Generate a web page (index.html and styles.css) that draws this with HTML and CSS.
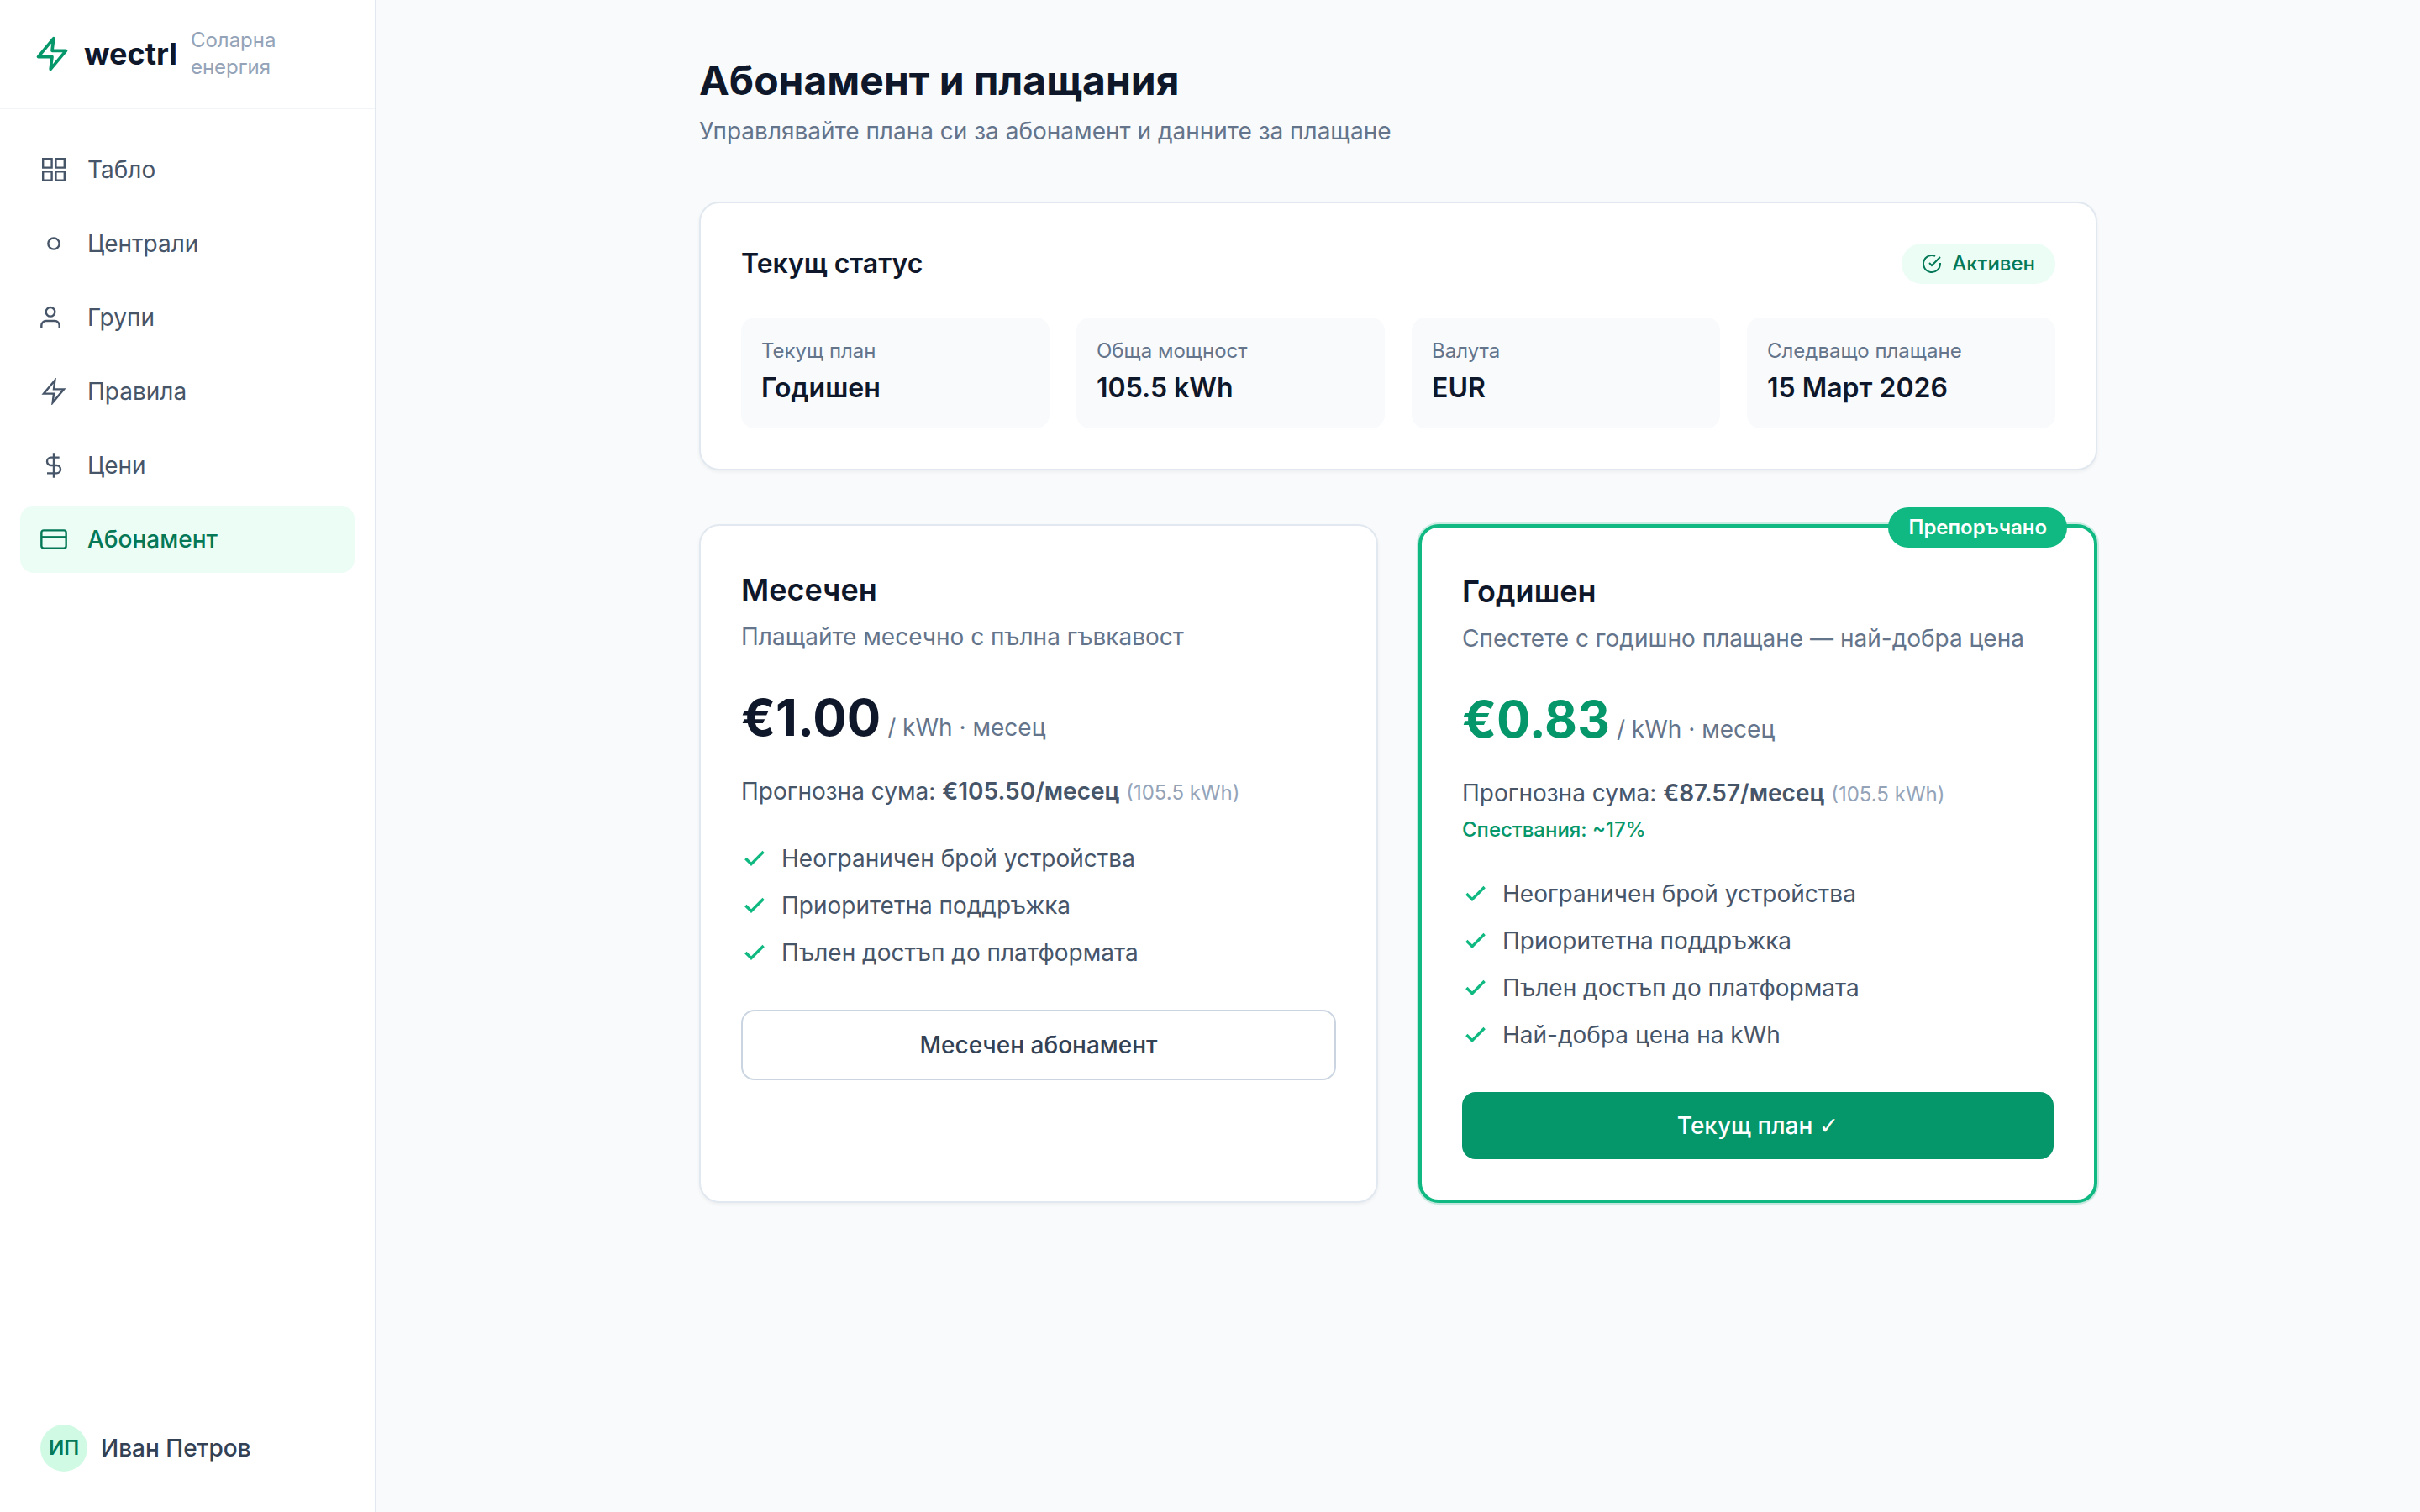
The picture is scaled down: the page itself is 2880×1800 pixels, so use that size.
FILE: index.html
```html
<!DOCTYPE html>
<html lang="bg">
<head>
<meta charset="utf-8">
<meta name="viewport" content="width=device-width, initial-scale=1">
<title>Абонамент и плащания – wectrl</title>
<link rel="stylesheet" href="styles.css">
</head>
<body>
<svg class="sprite" aria-hidden="true">
  <symbol id="check" viewBox="0 0 24 24"><path d="M20 6 9 17l-5-5"/></symbol>
</svg>
<div class="app">
  <aside class="sidebar">
    <header class="brand">
      <svg class="brand-icon" viewBox="0 0 24 24" aria-hidden="true"><path d="M13 2 3 14h9l-1 8 10-12h-9l1-8z"/></svg>
      <span class="brand-name">wectrl</span>
      <span class="brand-tagline">Соларна енергия</span>
    </header>
    <nav class="nav">
      <a class="nav-link" href="#"><svg class="nav-icon" viewBox="0 0 24 24" aria-hidden="true"><path d="M2.4 2.4h7.8v7.8H2.4zM13.8 2.4h7.8v7.8h-7.8zM2.4 13.8h7.8v7.8H2.4zM13.8 13.8h7.8v7.8h-7.8z"/></svg>Табло</a>
      <a class="nav-link" href="#"><svg class="nav-icon" viewBox="0 0 24 24" aria-hidden="true"><circle cx="12" cy="12" r="5"/></svg>Централи</a>
      <a class="nav-link" href="#"><svg class="nav-icon" viewBox="0 0 24 24" aria-hidden="true"><path d="M17 21v-2a4 4 0 0 0-4-4H5a4 4 0 0 0-4 4v2"/><circle cx="9" cy="7" r="4"/></svg>Групи</a>
      <a class="nav-link" href="#"><svg class="nav-icon" viewBox="0 0 24 24" aria-hidden="true"><path d="M13 2 3 14h9l-1 8 10-12h-9l1-8z"/></svg>Правила</a>
      <a class="nav-link" href="#"><svg class="nav-icon" viewBox="0 0 24 24" aria-hidden="true"><path d="M12 1v22M17 5H9.500a3.500 3.500 0 0 0 0 7h5a3.500 3.500 0 0 1 0 7H6"/></svg>Цени</a>
      <a class="nav-link nav-link-active" href="#" aria-current="page"><svg class="nav-icon" viewBox="0 0 24 24" aria-hidden="true"><rect x="1" y="4" width="22" height="16" rx="2"/><path d="M1 10h22"/></svg>Абонамент</a>
    </nav>
    <footer class="user">
      <span class="avatar">ИП</span>
      <span class="user-name">Иван Петров</span>
    </footer>
  </aside>

  <main class="main">
    <div class="content">
      <header class="page-header">
        <h1 class="page-title">Абонамент и плащания</h1>
        <p class="muted">Управлявайте плана си за абонамент и данните за плащане</p>
      </header>

      <section class="card">
        <div class="status-header">
          <h2 class="status-title">Текущ статус</h2>
          <span class="pill pill-active"><svg class="pill-icon" viewBox="0 0 24 24" aria-hidden="true"><path d="M22 11.080V12a10 10 0 1 1-5.930-9.140"/><path d="M22 4 12 14.010l-3-3"/></svg>Активен</span>
        </div>
        <dl class="stats">
          <div class="stat"><dt class="stat-label">Текущ план</dt><dd class="stat-value">Годишен</dd></div>
          <div class="stat"><dt class="stat-label">Обща мощност</dt><dd class="stat-value">105.5 kWh</dd></div>
          <div class="stat"><dt class="stat-label">Валута</dt><dd class="stat-value">EUR</dd></div>
          <div class="stat"><dt class="stat-label">Следващо плащане</dt><dd class="stat-value">15 Март 2026</dd></div>
        </dl>
      </section>

      <div class="plans">
        <section class="card">
          <h2 class="plan-title">Месечен</h2>
          <p class="plan-desc muted">Плащайте месечно с пълна гъвкавост</p>
          <p class="price"><span class="price-amount">€1.00</span><span class="muted">/ kWh · месец</span></p>
          <p class="estimate">Прогнозна сума: <strong>€105.50/месец</strong> <small>(105.5 kWh)</small></p>
          <ul class="features">
            <li class="feature"><svg class="check" aria-hidden="true"><use href="#check"/></svg>Неограничен брой устройства</li>
            <li class="feature"><svg class="check" aria-hidden="true"><use href="#check"/></svg>Приоритетна поддръжка</li>
            <li class="feature"><svg class="check" aria-hidden="true"><use href="#check"/></svg>Пълен достъп до платформата</li>
          </ul>
          <button class="button button-outline" type="button">Месечен абонамент</button>
        </section>

        <section class="card card-featured">
          <span class="pill pill-featured">Препоръчано</span>
          <h2 class="plan-title">Годишен</h2>
          <p class="plan-desc muted">Спестете с годишно плащане — най-добра цена</p>
          <p class="price"><span class="price-amount price-best">€0.83</span><span class="muted">/ kWh · месец</span></p>
          <p class="estimate">Прогнозна сума: <strong>€87.57/месец</strong> <small>(105.5 kWh)</small></p>
          <p class="savings">Спествания: ~17%</p>
          <ul class="features">
            <li class="feature"><svg class="check" aria-hidden="true"><use href="#check"/></svg>Неограничен брой устройства</li>
            <li class="feature"><svg class="check" aria-hidden="true"><use href="#check"/></svg>Приоритетна поддръжка</li>
            <li class="feature"><svg class="check" aria-hidden="true"><use href="#check"/></svg>Пълен достъп до платформата</li>
            <li class="feature"><svg class="check" aria-hidden="true"><use href="#check"/></svg>Най-добра цена на kWh</li>
          </ul>
          <button class="button button-primary" type="button">Текущ план <span class="tick">✓</span></button>
        </section>
      </div>
    </div>
  </main>
</div>
</body>
</html>
```
FILE: styles.css
```css
*,
*::before,
*::after {
  box-sizing: border-box;
}

body {
  margin: 0;
  background: #f8fafc;
  color: #0f172a;
  font-family: Inter, "Noto Sans", sans-serif;
  font-size: 28px;
  line-height: 40px;
  -webkit-font-smoothing: antialiased;
}

h1, h2, p, ul, dl, dd {
  margin: 0;
  padding: 0;
}

svg {
  display: block;
  flex: none;
  fill: none;
  stroke: currentColor;
}

.sprite {
  position: absolute;
  width: 0;
  height: 0;
}

.app {
  display: flex;
  min-height: 100vh;
}

/* Sidebar */

.sidebar {
  display: flex;
  flex: none;
  flex-direction: column;
  width: 448px;
  border-right: 2px solid #e2e8f0;
  background: #fff;
}

.brand {
  display: flex;
  align-items: center;
  gap: 16px;
  padding: 32px 40px;
  border-bottom: 2px solid #f1f5f9;
}

.brand-icon {
  width: 44px;
  height: 44px;
  color: #059669;
  stroke-width: 2;
  stroke-linecap: round;
  stroke-linejoin: round;
}

.brand-name {
  font-size: 36px;
  font-weight: 700;
}

.brand-tagline {
  color: #94a3b8;
  font-size: 24px;
  line-height: 32px;
}

.nav {
  display: flex;
  flex: 1;
  flex-direction: column;
  gap: 8px;
  padding: 32px 24px;
}

.nav-link {
  display: flex;
  align-items: center;
  gap: 24px;
  padding: 20px 24px;
  border-radius: 16px;
  color: #475569;
  text-decoration: none;
}

.nav-link-active {
  background: #ecfdf5;
  color: #047857;
  font-weight: 500;
}

.nav-icon {
  width: 32px;
  height: 32px;
  overflow: hidden;
  stroke-width: 1.8;
}

.user {
  display: flex;
  align-items: center;
  gap: 16px;
  padding: 48px;
}

.avatar {
  display: flex;
  align-items: center;
  justify-content: center;
  width: 56px;
  height: 56px;
  border-radius: 50%;
  background: #d1fae5;
  color: #047857;
  font-size: 24px;
  font-weight: 600;
  line-height: 32px;
}

.user-name {
  color: #334155;
  font-weight: 500;
}

/* Page */

.main {
  flex: 1;
  min-width: 0;
}

.content {
  display: flex;
  flex-direction: column;
  gap: 64px;
  max-width: 1792px;
  margin: 0 auto;
  padding: 64px;
}

.page-title {
  margin-bottom: 8px;
  font-size: 48px;
  font-weight: 700;
  line-height: 64px;
}

.muted {
  color: #64748b;
}

.card {
  position: relative;
  padding: 48px;
  border: 2px solid #e2e8f0;
  border-radius: 24px;
  background: #fff;
  box-shadow: 0 2px 4px rgb(0 0 0 / 5%);
}

.card-featured {
  border: 4px solid #10b981;
  box-shadow: 0 0 0 2px rgb(16 185 129 / 20%), 0 2px 4px rgb(0 0 0 / 5%);
}

.pill {
  display: flex;
  align-items: center;
  gap: 12px;
  padding: 8px 24px;
  border-radius: 24px;
  font-size: 24px;
  line-height: 32px;
}

.pill-active {
  background: #ecfdf5;
  color: #047857;
  font-weight: 500;
}

.pill-icon {
  width: 24px;
  height: 24px;
  stroke-width: 2;
}

.pill-featured {
  position: absolute;
  top: -24px;
  right: 32px;
  background: #10b981;
  color: #fff;
  font-weight: 600;
}

/* Current status */

.status-header {
  display: flex;
  align-items: center;
  justify-content: space-between;
  margin-bottom: 40px;
}

.status-title {
  font-size: 32px;
  font-weight: 600;
  line-height: 48px;
}

.stats {
  display: grid;
  grid-template-columns: repeat(4, 1fr);
  gap: 32px;
}

.stat {
  padding: 24px;
  border-radius: 16px;
  background: #f8fafc;
}

.stat-label {
  margin-bottom: 4px;
  color: #64748b;
  font-size: 24px;
  line-height: 32px;
}

.stat-value {
  font-size: 32px;
  font-weight: 600;
  line-height: 48px;
}

/* Plans */

.plans {
  display: grid;
  grid-template-columns: repeat(2, 1fr);
  gap: 48px;
}

.plan-title {
  font-size: 36px;
  font-weight: 600;
  line-height: 56px;
}

.plan-desc {
  margin-top: 8px;
}

.price {
  display: flex;
  align-items: baseline;
  gap: 8px;
  margin-top: 40px;
}

.price-amount {
  font-size: 60px;
  font-weight: 700;
  line-height: 72px;
}

.price-best {
  color: #059669;
}

.estimate {
  margin-top: 32px;
  color: #475569;
}

.estimate strong {
  font-weight: 600;
}

.estimate small {
  color: #94a3b8;
  font-size: 24px;
  line-height: 32px;
}

.savings {
  margin-top: 8px;
  color: #059669;
  font-size: 24px;
  font-weight: 500;
  line-height: 32px;
}

.features {
  display: flex;
  flex-direction: column;
  gap: 16px;
  margin: 40px 0 48px;
  list-style: none;
}

.feature {
  display: flex;
  align-items: center;
  gap: 16px;
  color: #475569;
}

.check {
  width: 32px;
  height: 32px;
  color: #10b981;
  stroke-width: 2.5;
}

.button {
  display: block;
  width: 100%;
  padding: 20px 24px;
  border: 0;
  border-radius: 16px;
  font: inherit;
  font-weight: 500;
  text-align: center;
  cursor: pointer;
}

.button-outline {
  border: 2px solid #cbd5e1;
  background: #fff;
  color: #334155;
}

.button-primary {
  background: #059669;
  color: #fff;
}

.tick {
  font-family: "DejaVu Sans", sans-serif;
  line-height: 32px;
}
```
